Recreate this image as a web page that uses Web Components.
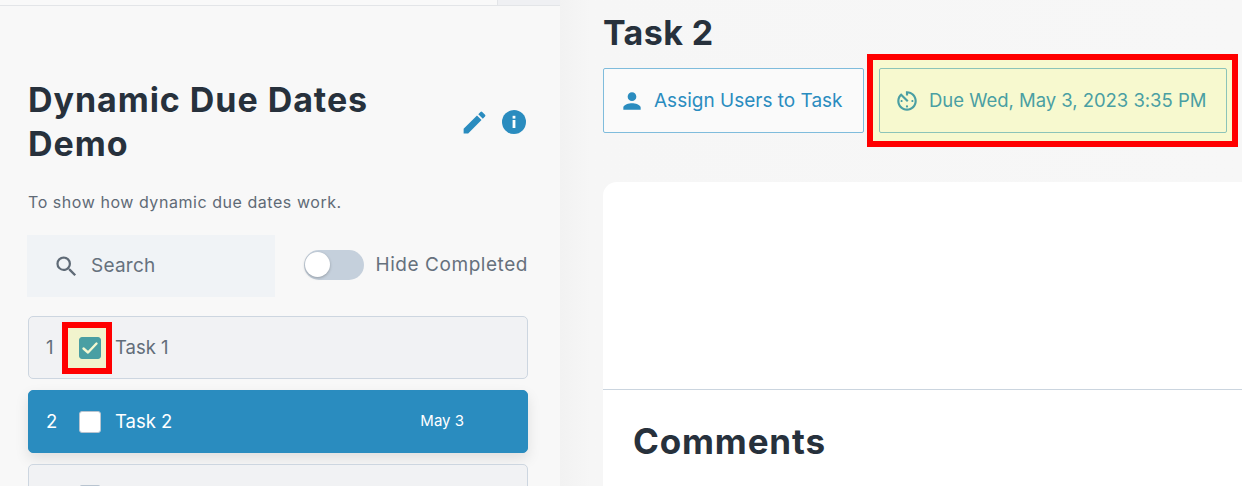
<!DOCTYPE html>
<html><head><meta charset="utf-8"><style>
html,body{margin:0;padding:0;width:1242px;height:486px;overflow:hidden;background:#f6f6f6}
body{font-family:Inter,"Liberation Sans",sans-serif}
</style></head><body>
<template id="t-app"><style>
:host{display:grid;grid-template-columns:560px 1fr;width:1242px;height:486px;overflow:hidden}
</style><slot name="side"></slot><slot name="main"></slot></template>

<template id="t-side"><style>
:host{display:block;background:#f8f8f8;height:486px;overflow:hidden}
.tabs{display:flex;justify-content:flex-end;height:5px;background:#f9f9f9;border-bottom:1px solid #e3e5e8}
.tabs i{display:block;width:62px;background:#eff0f3;border-left:1px solid #e3e5e8}
.body{padding:72px 32px 0 28px}
.head{display:flex;align-items:center;justify-content:space-between}
h1{margin:0;width:400px;font:700 34px/44px Inter,sans-serif;letter-spacing:.95px;color:#27313c}
.ic{display:flex;align-items:center;gap:13px;margin-right:2px}
p{margin:25px 0 0;font:400 16px/22px Inter,sans-serif;color:#5f6a76;letter-spacing:.55px}
.tools{display:flex;align-items:center;justify-content:space-between;margin-top:22px;margin-left:-1px}
.list{display:flex;flex-direction:column;gap:11px;margin-top:19px}
</style><div class="tabs"><i></i></div><div class="body">
<div class="head"><h1>Dynamic Due Dates Demo</h1><div class="ic">
<svg width="29" height="29" viewBox="0 0 24 24" fill="#2a8cbf"><path d="M3 17.25V21h3.75L17.81 9.94l-3.75-3.75L3 17.25zM20.71 7.04a1 1 0 0 0 0-1.41l-2.34-2.34a1 1 0 0 0-1.41 0l-1.83 1.83 3.75 3.75 1.83-1.83z"/></svg>
<svg width="24" height="24" viewBox="0 0 24 24"><circle cx="12" cy="12" r="12" fill="#2a8cbf"/><rect x="10.6" y="10" width="2.8" height="8" fill="#fff"/><rect x="10.6" y="5.8" width="2.8" height="2.8" fill="#fff"/></svg>
</div></div>
<p>To show how dynamic due dates work.</p>
<div class="tools"><search-box>Search</search-box><hide-toggle>Hide Completed</hide-toggle></div>
<div class="list"><slot></slot></div>
</div></template>

<template id="t-search"><style>
:host{display:flex;align-items:center;gap:11px;box-sizing:border-box;width:248px;height:62px;background:#f0f3f6;padding-left:26px;font:400 19px/24px Inter,sans-serif;letter-spacing:.25px;color:#66717d}
</style><svg width="27" height="27" viewBox="0 0 24 24" fill="#5f6a76"><path d="M15.5 14h-.79l-.28-.27A6.47 6.47 0 0 0 16 9.5 6.5 6.5 0 1 0 9.5 16c1.61 0 3.09-.59 4.23-1.57l.27.28v.79l5 4.99L20.49 19l-4.99-5zm-6 0C7.01 14 5 11.99 5 9.5S7.01 5 9.5 5 14 7.01 14 9.5 11.99 14 9.5 14z"/></svg><slot></slot></template>

<template id="t-toggle"><style>
:host{display:flex;align-items:center;gap:12px;margin-bottom:2px;font:400 19px/24px Inter,sans-serif;letter-spacing:.55px;color:#66717d;white-space:nowrap}
.tr{display:block;position:relative;width:60px;height:30px;border-radius:15px;background:#c5d0dc}
.kn{position:absolute;left:1.5px;top:2px;width:25px;height:25px;border-radius:50%;background:#fff;box-shadow:0 1px 3px rgba(0,0,0,.25)}
</style><span class="tr"><span class="kn"></span></span><slot></slot></template>

<template id="t-row"><style>
:host{display:flex;align-items:center;box-sizing:border-box;height:63px;border:1px solid #cdd6e0;border-radius:5px;background:#f1f2f4;color:#626d79;font:400 18.5px/24px Inter,sans-serif;padding-left:17px;position:relative}
:host([selected]){background:#2a8cbf;border-color:#2a8cbf;color:#fff;box-shadow:0 6px 14px rgba(0,0,0,.1)}
.n{width:33px;margin-bottom:2px}
.box{display:block;box-sizing:border-box;width:22px;height:22px;border-radius:3px;border:1px solid #b8c4d0;background:#aab4bf;margin-right:14px;flex:none;position:relative;z-index:1}
:host([selected]) .box{background:#fff}
:host([checked]) .box{background:#4a9fa3;border-color:#4a9fa3}
svg{display:none;width:20px;height:20px}
:host([checked]) svg{display:block}
.t{flex:1;margin-bottom:2px}
.d{font-size:15px;margin-right:63px;margin-bottom:2px}
.mark{display:none;position:absolute;left:33px;top:5px;width:50px;height:52px;box-sizing:border-box;border:6px solid #f00;background:#f1f4cd}
:host([checked]) .mark{display:block}
</style><span class="n"><slot name="n"></slot></span><span class="mark"></span><span class="box"><svg viewBox="0 0 20 20" fill="none" stroke="#f5f8d0" stroke-width="2.4" stroke-linecap="round" stroke-linejoin="round"><path d="M3.5 10.5l4.5 4L16.5 5.5"/></svg></span><span class="t"><slot></slot></span><span class="d"><slot name="d"></slot></span></template>

<template id="t-main"><style>
:host{display:block;height:486px;overflow:hidden;background:linear-gradient(90deg,#f2f2f2,#f6f6f6 30px,#f7f7f7);padding-left:43px;box-sizing:border-box}
h2{margin:0;padding-top:13px;height:40px;font:700 34px/40px Inter,sans-serif;letter-spacing:.4px;color:#27313c}
.btns{display:flex;align-items:flex-start;margin-top:15px}
.wrap{margin-left:3px;margin-top:-14px;border:6px solid #f00;padding:8px 5px 8px 6px;background:#f7f9cf;flex:none}
.card{margin-top:35px;width:700px;height:400px;background:#fff;border-radius:14px 0 0 0;display:flex;flex-direction:column}
.sp{height:207px;border-bottom:1px solid #cbd5df;flex:none}
h3{margin:29px 0 0 30px;font:700 35px/44px Inter,sans-serif;letter-spacing:.85px;color:#27313c}
</style><h2>Task 2</h2><div class="btns">
<act-btn><svg slot="i" width="26" height="26" viewBox="0 0 24 24" fill="#2a8cbf"><path d="M12 12a4 4 0 1 0 0-8 4 4 0 0 0 0 8zm0 2c-2.7 0-8 1.3-8 4v2h16v-2c0-2.7-5.3-4-8-4z"/></svg><span>Assign Users to Task</span></act-btn>
<div class="wrap"><act-btn due><svg slot="i" width="26" height="26" viewBox="0 0 24 24" fill="#4a9fa3"><path d="M11 17c0 .55.45 1 1 1s1-.45 1-1-.45-1-1-1-1 .45-1 1zm0-14v4h2V5.08c3.39.49 6 3.39 6 6.92 0 3.87-3.13 7-7 7s-7-3.13-7-7c0-1.68.59-3.22 1.58-4.42L12 13l1.41-1.41-6.8-6.8v.02C4.42 6.45 3 9.05 3 12c0 4.97 4.02 9 9 9 4.97 0 9-4.03 9-9s-4.03-9-9-9h-1zm7 9c0-.55-.45-1-1-1s-1 .45-1 1 .45 1 1 1 1-.45 1-1zM6 12c0 .55.45 1 1 1s1-.45 1-1-.45-1-1-1-1 .45-1 1z"/></svg><span style="margin-bottom:2px">Due Wed, May 3, 2023 3:35 PM</span></act-btn></div>
</div>
<div class="card"><div class="sp"></div><h3>Comments</h3></div></template>

<template id="t-btn"><style>
:host{display:flex;align-items:center;box-sizing:border-box;height:65px;width:261px;padding-left:15px;gap:9px;border:1px solid #7fbcdc;border-radius:2px;background:#fafafa;color:#2a8cbf;font:400 19px/24px Inter,sans-serif;white-space:nowrap}
:host([due]){width:348px;padding-left:14px;gap:9px;border-color:#8cc4b8;background:#f7f9cf;color:#4a9fa3;font-size:18.5px;letter-spacing:-.03px}
</style><slot name="i"></slot><slot></slot></template>

<script>
const def=(n,t)=>customElements.define(n,class extends HTMLElement{constructor(){super();this.attachShadow({mode:"open"}).appendChild(document.getElementById(t).content.cloneNode(true))}});
def("app-shell","t-app");def("side-panel","t-side");def("search-box","t-search");def("hide-toggle","t-toggle");def("task-row","t-row");def("main-panel","t-main");def("act-btn","t-btn");
</script>
<app-shell>
<side-panel slot="side">
<task-row checked><span slot="n">1</span>Task 1</task-row>
<task-row selected><span slot="n">2</span>Task 2<span slot="d">May 3</span></task-row>
<task-row></task-row>
</side-panel>
<main-panel slot="main"></main-panel>
</app-shell>
</body></html>
